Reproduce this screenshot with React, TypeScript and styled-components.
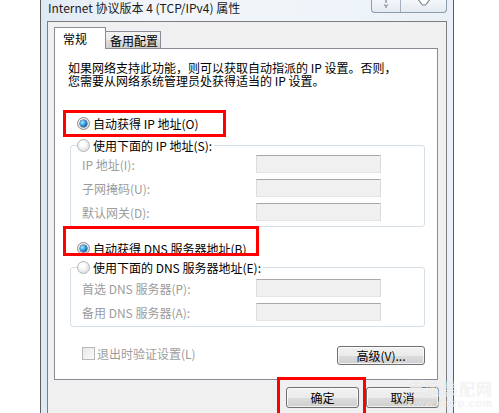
import React from "react";
import styled, { createGlobalStyle } from "styled-components";

const GlobalStyle = createGlobalStyle`
  html, body {
    margin: 0;
    padding: 0;
    background: #fff;
  }
  body {
    font-family: "Noto Sans CJK SC", "Liberation Sans", sans-serif;
    font-size: 12px;
    color: #000;
  }
  * {
    box-sizing: border-box;
  }
`;

const Screen = styled.div`
  position: relative;
  width: 499px;
  height: 413px;
  overflow: hidden;
  background: #fff;
`;

const Window = styled.div`
  margin-left: 40px;
  width: 414px;
  height: 413px;
  border-left: 1px solid #5e5e5e;
  border-right: 1px solid #5e5e5e;
  background: linear-gradient(90deg, #dfe9f4, #f2f6fa 25%, #eef4f9 75%, #e9f0f7);
  display: flex;
  flex-direction: column;
`;

const TitleBar = styled.div`
  height: 21px;
  display: flex;
  align-items: flex-start;
  justify-content: space-between;
  padding: 0 6px 0 7px;
`;

const Title = styled.div`
  padding-top: 1px;
  line-height: 13px;
  font-size: 12px;
  color: #1b1b1b;
  white-space: nowrap;
`;

const CaptionButtons = styled.div`
  display: flex;
  height: 13px;
  border: 1px solid #8d9bab;
  border-top: none;
  border-radius: 0 0 4px 4px;
  overflow: hidden;
  background: linear-gradient(#f4f7fa, #e3eaf1);
`;

const CaptionButton = styled.div<{ $w: number }>`
  width: ${(p) => p.$w}px;
  display: flex;
  justify-content: center;
  align-items: flex-end;
  padding-bottom: 4px;
  & + & {
    border-left: 1px solid #a5b1bf;
  }
  svg {
    display: block;
  }
`;

const Client = styled.div`
  flex: 1;
  margin: 0 6px;
  border: 1px solid #7d7d7d;
  border-bottom: none;
  background: #f0f0f0;
  padding: 5px 0 0 6px;
  display: flex;
  flex-direction: column;
`;

const TabStrip = styled.div`
  position: relative;
  z-index: 2;
  height: 22px;
  margin-bottom: -1px;
  display: flex;
  align-items: flex-end;
`;

const Tab = styled.div<{ $active?: boolean; $w: number }>`
  width: ${(p) => p.$w}px;
  height: ${(p) => (p.$active ? 22 : 18)}px;
  border: 1px solid #898c95;
  border-bottom: ${(p) => (p.$active ? "none" : "1px solid #898c95")};
  border-left: ${(p) => (p.$active ? "1px solid #898c95" : "none")};
  background: ${(p) =>
    p.$active ? "#fff" : "linear-gradient(#f3f3f3, #ebebeb 50%, #dddddd 51%, #cfcfcf)"};
  padding-left: ${(p) => (p.$active ? 8 : 4)}px;
  padding-top: ${(p) => (p.$active ? 3 : 1)}px;
  line-height: 15px;
  white-space: nowrap;
`;

const Panel = styled.div`
  width: 384px;
  height: 332px;
  border: 1px solid #898c95;
  background: #fff;
  display: flex;
  flex-direction: column;
`;

const Description = styled.div`
  margin: 12px 0 0 13px;
  line-height: 13px;
  white-space: nowrap;
`;

const OptionRow = styled.div<{ $top: number }>`
  position: relative;
  margin-top: ${(p) => p.$top}px;
  height: 16px;
  padding-left: 22px;
  display: flex;
  align-items: center;
  gap: 3px;
  white-space: nowrap;
`;

const Highlight = styled.div<{ $x: number; $y: number; $w: number; $h: number }>`
  position: absolute;
  left: ${(p) => p.$x}px;
  top: ${(p) => p.$y}px;
  width: ${(p) => p.$w}px;
  height: ${(p) => p.$h}px;
  border: 3px solid #ff0000;
  pointer-events: none;
  z-index: 3;
`;

const Radio = styled.span<{ $checked?: boolean }>`
  position: relative;
  width: 13px;
  height: 13px;
  flex: none;
  border-radius: 50%;
  border: 1px solid ${(p) => (p.$checked ? "#8a8a8a" : "#b4b4b4")};
  background: radial-gradient(circle at 40% 35%, #ffffff 20%, #e4e4e4 70%, #cfcfcf);
  display: flex;
  align-items: center;
  justify-content: center;
  &::after {
    content: "";
    display: ${(p) => (p.$checked ? "block" : "none")};
    width: 7px;
    height: 7px;
    border-radius: 50%;
    background: radial-gradient(circle at 35% 35%, #b6ecff 0, #36a2e8 40%, #125ea8 75%, #0a2d55);
    box-shadow: 0 0 0 0.5px #1d3b5c;
  }
`;

const GroupBox = styled.fieldset<{ $top: number }>`
  margin: ${(p) => p.$top}px 12px 0 15px;
  padding: 0 0 5px 6px;
  border: 1px solid #d5dfe5;
  border-radius: 3px;
  min-width: 0;
`;

const GroupLegend = styled.legend`
  padding: 0 2px 0 0;
  height: 16px;
  display: flex;
  align-items: center;
  gap: 3px;
  white-space: nowrap;
`;

const FieldGrid = styled.div<{ $top: number }>`
  margin: ${(p) => p.$top}px 0 0 5px;
  display: grid;
  grid-template-columns: 174px 125px;
  grid-auto-rows: 18px;
  row-gap: 6px;
  align-items: center;
`;

const FieldLabel = styled.span`
  color: #9c9c9c;
  white-space: nowrap;
`;

const IpField = styled.div`
  height: 18px;
  border: 1px solid;
  border-color: #a9a9a9 #dcdcdc #e4e4e4 #dcdcdc;
  background: #f0f0f0;
  display: flex;
  align-items: flex-end;
  padding: 0 0 4px 33px;
`;

const Dot = styled.span`
  width: 1px;
  height: 1px;
  background: #6b6b6b;
  margin-right: 30px;
`;

const BottomRow = styled.div`
  margin-top: 19px;
  padding: 0 12px 0 27px;
  display: flex;
  align-items: flex-start;
  justify-content: space-between;
`;

const CheckOption = styled.div`
  height: 14px;
  display: flex;
  align-items: center;
  gap: 2px;
  color: #9c9c9c;
  white-space: nowrap;
`;

const CheckBox = styled.span`
  width: 13px;
  height: 13px;
  border: 1px solid #b8b8b8;
  background: linear-gradient(135deg, #e8e8e8, #fbfbfb);
`;

const Button = styled.button<{ $w: number; $h: number }>`
  position: relative;
  width: ${(p) => p.$w}px;
  height: ${(p) => p.$h}px;
  padding: 0;
  border: 1px solid #707070;
  border-radius: 3px;
  background: linear-gradient(#f2f2f2, #ebebeb 50%, #dddddd 51%, #cfcfcf);
  box-shadow: inset 0 0 0 1px rgba(255, 255, 255, 0.7);
  font-family: inherit;
  font-size: 12px;
  color: #000;
  line-height: 14px;
`;

const DialogButtons = styled.div`
  margin-top: 7px;
  padding-right: 7px;
  display: flex;
  justify-content: flex-end;
  gap: 7px;
`;

const Watermark = styled.div`
  position: absolute;
  right: 6px;
  bottom: 3px;
  display: flex;
  flex-direction: column;
  align-items: flex-end;
  color: rgba(255, 255, 255, 0.7);
  text-shadow: 0 0 1px rgba(0, 0, 0, 0.14);
  pointer-events: none;
`;

const WatermarkName = styled.span`
  font-size: 16px;
  letter-spacing: 1px;
  line-height: 18px;
`;

const WatermarkUrl = styled.span`
  font-family: "Liberation Sans", sans-serif;
  font-size: 11px;
  letter-spacing: 1px;
  line-height: 13px;
`;

const IpBox = () => (
  <IpField>
    <Dot />
    <Dot />
    <Dot />
  </IpField>
);

export default function App() {
  return (
    <Screen>
      <GlobalStyle />
      <Window>
        <TitleBar>
          <Title>Internet 协议版本 4 (TCP/IPv4) 属性</Title>
          <CaptionButtons>
            <CaptionButton $w={28}>
              <svg width="8" height="8" viewBox="0 0 8 8">
                <path d="M4 0 V3 M2 4.5 Q4 7 6 4.5 M4 6 V8" stroke="#7a828b" fill="none" strokeWidth="1.2" />
              </svg>
            </CaptionButton>
            <CaptionButton $w={46}>
              <svg width="14" height="8" viewBox="0 0 14 8">
                <path d="M1.5 0 L5.5 5 L8.5 5 L12.5 0" stroke="#7a828b" fill="#fff" strokeWidth="1.2" />
              </svg>
            </CaptionButton>
          </CaptionButtons>
        </TitleBar>
        <Client>
          <TabStrip>
            <Tab $active $w={52}>常规</Tab>
            <Tab $w={55}>备用配置</Tab>
          </TabStrip>
          <Panel>
            <Description>
              如果网络支持此功能，则可以获取自动指派的 IP 设置。否则，
              <br />
              您需要从网络系统管理员处获得适当的 IP 设置。
            </Description>

            <OptionRow $top={28}>
              <Highlight $x={8} $y={-5} $w={163} $h={27} />
              <Radio $checked />
              <span>自动获得 IP 地址(O)</span>
            </OptionRow>

            <GroupBox $top={6}>
              <GroupLegend>
                <Radio />
                <span>使用下面的 IP 地址(S):</span>
              </GroupLegend>
              <FieldGrid $top={2}>
                <FieldLabel>IP 地址(I):</FieldLabel>
                <IpBox />
                <FieldLabel>子网掩码(U):</FieldLabel>
                <IpBox />
                <FieldLabel>默认网关(D):</FieldLabel>
                <IpBox />
              </FieldGrid>
            </GroupBox>

            <OptionRow $top={13}>
              <Highlight $x={8} $y={-14} $w={196} $h={30} />
              <Radio $checked />
              <span>自动获得 DNS 服务器地址(B)</span>
            </OptionRow>

            <GroupBox $top={3}>
              <GroupLegend>
                <Radio />
                <span>使用下面的 DNS 服务器地址(E):</span>
              </GroupLegend>
              <FieldGrid $top={4}>
                <FieldLabel>首选 DNS 服务器(P):</FieldLabel>
                <IpBox />
                <FieldLabel>备用 DNS 服务器(A):</FieldLabel>
                <IpBox />
              </FieldGrid>
            </GroupBox>

            <BottomRow>
              <CheckOption>
                <CheckBox />
                <span>退出时验证设置(L)</span>
              </CheckOption>
              <Button $w={88} $h={19}>高级(V)...</Button>
            </BottomRow>
          </Panel>
          <DialogButtons>
            <Button $w={73} $h={21}>
              <Highlight $x={-10} $y={-11} $w={89} $h={60} />
              确定
            </Button>
            <Button $w={73} $h={21}>取消</Button>
          </DialogButtons>
        </Client>
      </Window>
      <Watermark>
        <WatermarkName>电脑装配网</WatermarkName>
        <WatermarkUrl>www.dnzp.com</WatermarkUrl>
      </Watermark>
    </Screen>
  );
}
